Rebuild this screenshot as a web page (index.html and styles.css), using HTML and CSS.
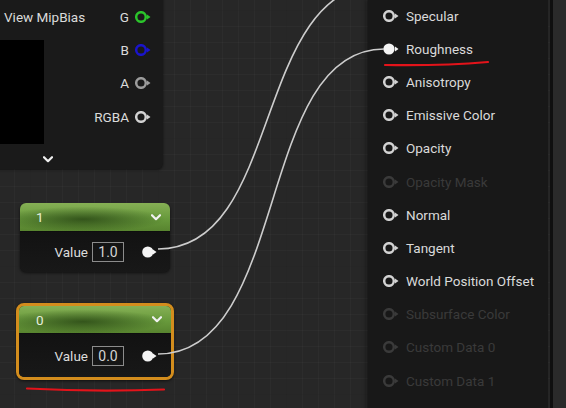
FILE: index.html
```html
<!DOCTYPE html>
<html>
<head>
<meta charset="utf-8">
<link rel="stylesheet" href="styles.css">
</head>
<body>
<div class="app">
  <div class="graph">
    <div class="node tex">
      <div class="tex-row">
        <span class="tex-label">View MipBias</span>
        <span class="out">G <svg class="pin pin-g" viewBox="0 0 17 12"><circle cx="6" cy="6" r="4.8"/><polygon points="12,3.4 15.5,6 12,8.6"/></svg></span>
      </div>
      <div class="tex-body">
        <div class="preview"></div>
        <div class="outs">
          <div class="out">B <svg class="pin pin-b" viewBox="0 0 17 12"><circle cx="6" cy="6" r="4.8"/><polygon points="12,3.4 15.5,6 12,8.6"/></svg></div>
          <div class="out">A <svg class="pin pin-a" viewBox="0 0 17 12"><circle cx="6" cy="6" r="4.8"/><polygon points="12,3.4 15.5,6 12,8.6"/></svg></div>
          <div class="out">RGBA <svg class="pin pin-w" viewBox="0 0 17 12"><circle cx="6" cy="6" r="4.8"/><polygon points="12,3.4 15.5,6 12,8.6"/></svg></div>
        </div>
      </div>
      <div class="tex-foot"><svg class="chev" viewBox="0 0 10 7"><polyline points="1,1.2 5,5.2 9,1.2"/></svg></div>
    </div>

    <div class="node const one">
      <div class="head"><span>1</span><svg class="chev" viewBox="0 0 10 7"><polyline points="1,1.2 5,5.2 9,1.2"/></svg></div>
      <div class="cbody">
        <span class="vlabel">Value</span>
        <span class="vbox">1.0</span>
        <svg class="pin pin-fill" viewBox="0 0 16 12"><circle cx="5.8" cy="6" r="5.6"/><polygon points="11,3.6 14.5,6 11,8.4"/></svg>
      </div>
    </div>

    <div class="node const zero">
      <div class="head"><span>0</span><svg class="chev" viewBox="0 0 10 7"><polyline points="1,1.2 5,5.2 9,1.2"/></svg></div>
      <div class="cbody">
        <span class="vlabel">Value</span>
        <span class="vbox">0.0</span>
        <svg class="pin pin-fill" viewBox="0 0 16 12"><circle cx="5.8" cy="6" r="5.6"/><polygon points="11,3.6 14.5,6 11,8.4"/></svg>
      </div>
    </div>

    <div class="node result">
      <div class="in"><svg class="pin pin-w" viewBox="0 0 17 12"><circle cx="6" cy="6" r="4.8"/><polygon points="12,3.4 15.5,6 12,8.6"/></svg><span>Specular</span></div>
      <div class="in"><svg class="pin pin-fill" viewBox="0 0 17 12"><circle cx="6" cy="6" r="5.6"/><polygon points="12,3.4 15.5,6 12,8.6"/></svg><span>Roughness</span></div>
      <div class="in"><svg class="pin pin-w" viewBox="0 0 17 12"><circle cx="6" cy="6" r="4.8"/><polygon points="12,3.4 15.5,6 12,8.6"/></svg><span>Anisotropy</span></div>
      <div class="in"><svg class="pin pin-w" viewBox="0 0 17 12"><circle cx="6" cy="6" r="4.8"/><polygon points="12,3.4 15.5,6 12,8.6"/></svg><span>Emissive Color</span></div>
      <div class="in"><svg class="pin pin-w" viewBox="0 0 17 12"><circle cx="6" cy="6" r="4.8"/><polygon points="12,3.4 15.5,6 12,8.6"/></svg><span>Opacity</span></div>
      <div class="in off"><svg class="pin" viewBox="0 0 17 12"><circle cx="6" cy="6" r="4.8"/><polygon points="12,3.4 15.5,6 12,8.6"/></svg><span>Opacity Mask</span></div>
      <div class="in"><svg class="pin pin-w" viewBox="0 0 17 12"><circle cx="6" cy="6" r="4.8"/><polygon points="12,3.4 15.5,6 12,8.6"/></svg><span>Normal</span></div>
      <div class="in"><svg class="pin pin-w" viewBox="0 0 17 12"><circle cx="6" cy="6" r="4.8"/><polygon points="12,3.4 15.5,6 12,8.6"/></svg><span>Tangent</span></div>
      <div class="in"><svg class="pin pin-w" viewBox="0 0 17 12"><circle cx="6" cy="6" r="4.8"/><polygon points="12,3.4 15.5,6 12,8.6"/></svg><span>World Position Offset</span></div>
      <div class="in off"><svg class="pin" viewBox="0 0 17 12"><circle cx="6" cy="6" r="4.8"/><polygon points="12,3.4 15.5,6 12,8.6"/></svg><span>Subsurface Color</span></div>
      <div class="in off"><svg class="pin" viewBox="0 0 17 12"><circle cx="6" cy="6" r="4.8"/><polygon points="12,3.4 15.5,6 12,8.6"/></svg><span>Custom Data 0</span></div>
      <div class="in off"><svg class="pin" viewBox="0 0 17 12"><circle cx="6" cy="6" r="4.8"/><polygon points="12,3.4 15.5,6 12,8.6"/></svg><span>Custom Data 1</span></div>
    </div>

    <svg class="wires" viewBox="0 0 550 408">
      <path class="wire" d="M158,249 C285,249 250,-17 385,-17"/>
      <path class="wire" d="M158,354 C290,354 255,49 384,49"/>
      <path class="mark" d="M27,388.5 Q95,392 164,389.5"/>
      <path class="mark" d="M385,65 Q440,66 488,62"/>
    </svg>
  </div>
  <div class="side"></div>
</div>
</body>
</html>
```

FILE: styles.css
```css
* { box-sizing: border-box; }

body {
  margin: 0;
  background: #262626;
  font-family: Roboto, "Noto Sans", "Liberation Sans", sans-serif;
  font-size: 13.5px;
  color: #d6d6d6;
}

.app {
  display: flex;
  width: 566px;
  height: 408px;
  overflow: hidden;
}

.graph {
  position: relative;
  flex: 1;
  overflow: hidden;
  background-color: #272727;
  background-image:
    linear-gradient(90deg, rgba(0,0,0,0.14) 1px, transparent 1px),
    linear-gradient(rgba(0,0,0,0.14) 1px, transparent 1px),
    linear-gradient(90deg, rgba(255,255,255,0.025) 1px, transparent 1px),
    linear-gradient(rgba(255,255,255,0.025) 1px, transparent 1px);
  background-size: 128px 128px, 128px 128px, 16px 16px, 16px 16px;
  background-position: 30px 10px, 30px 10px, 14px 10px, 14px 10px;
}

.side {
  width: 16px;
  border-left: 3px solid #0f0f0f;
  background: #2a2a2a;
}

.node { position: absolute; }

/* pins */
.pin {
  width: 17px;
  height: 12px;
  flex: none;
  color: #3a3a3a;
}
.pin circle { fill: none; stroke: currentColor; stroke-width: 2.5; }
.pin polygon { fill: currentColor; }
.pin-g { color: #2bc42b; }
.pin-b { color: #1a14cc; }
.pin-a { color: #9c9c9c; }
.pin-w { color: #d2d2d2; }
.pin-fill { color: #f4f4f4; }
.pin-fill circle { fill: currentColor; stroke: none; }

.chev {
  width: 10px;
  height: 7px;
  display: block;
}
.chev polyline {
  fill: none;
  stroke: #f0f0f0;
  stroke-width: 2.2;
  stroke-linecap: round;
  stroke-linejoin: round;
}

/* texture sample node */
.tex {
  left: -20px;
  top: -20px;
  width: 183px;
  padding-top: 20px;
  background: #1a1a1a;
  border-radius: 6px;
  box-shadow: 0 1px 3px rgba(0,0,0,0.55);
}
.tex-row {
  height: 33.3px;
  display: flex;
  align-items: center;
  justify-content: space-between;
  padding: 0 11px 0 24px;
}
.tex-label { color: #dadada; }
.tex-body {
  display: flex;
  align-items: flex-start;
}
.preview {
  width: 64px;
  height: 104px;
  margin-top: 6.7px;
  background: #000;
}
.outs {
  margin-left: auto;
  padding-right: 11px;
}
.out {
  height: 33.3px;
  display: flex;
  align-items: center;
  justify-content: flex-end;
  gap: 6px;
  color: #dadada;
}
.tex-foot {
  padding: 12px 0 6px 63px;
}

/* constant nodes */
.const {
  border-radius: 6px;
  background: #151515;
  box-shadow: 0 1px 3px rgba(0,0,0,0.6);
  overflow: hidden;
}
.one {
  left: 20px;
  top: 203px;
  width: 150px;
}
.zero {
  left: 16px;
  top: 303px;
  width: 158px;
  border: 3px solid #d38d1d;
  border-radius: 8px;
}
.head {
  height: 29px;
  display: flex;
  align-items: center;
  justify-content: space-between;
  padding: 0 9px 0 16px;
  color: #e6eedd;
  background:
    radial-gradient(55% 45% at 42% 58%, rgba(30,56,14,0.7), transparent),
    linear-gradient(180deg, #86b055 0%, #689a3c 55%, #58842f 100%);
  border-bottom: 1px solid #0e0e0e;
}
.zero .head { height: 28px; padding-left: 17px; }
.cbody {
  height: 40px;
  display: flex;
  align-items: center;
  justify-content: flex-end;
  padding-right: 12px;
  background: linear-gradient(180deg, #121212, #181818);
}
.zero .cbody { height: 43px; padding-right: 13px; }
.vlabel { color: #dcdcdc; margin-right: 4px; }
.vbox {
  width: 32px;
  height: 20px;
  display: flex;
  align-items: center;
  justify-content: center;
  border: 1.5px solid #8c8c8c;
  color: #d4d4d4;
  font-size: 14px;
  margin-right: 18px;
}
.cbody .pin { width: 16px; }

/* material result node */
.result {
  left: 368px;
  top: -1px;
  width: 180px;
  padding: 0 0 30px 15px;
  background: #181818;
  box-shadow: -2px 0 4px rgba(0,0,0,0.4);
}
.in {
  height: 33.2px;
  display: flex;
  align-items: center;
  gap: 6px;
  color: #dadada;
  white-space: nowrap;
}
.in.off { color: #3a3a3a; }

/* wires & annotations */
.wires {
  position: absolute;
  left: 0;
  top: 0;
  width: 550px;
  height: 408px;
  pointer-events: none;
  overflow: visible;
}
.wire {
  fill: none;
  stroke: #cdcdcd;
  stroke-width: 1.6;
}
.mark {
  fill: none;
  stroke: #e3131a;
  stroke-width: 2.2;
  stroke-linecap: round;
}
```
